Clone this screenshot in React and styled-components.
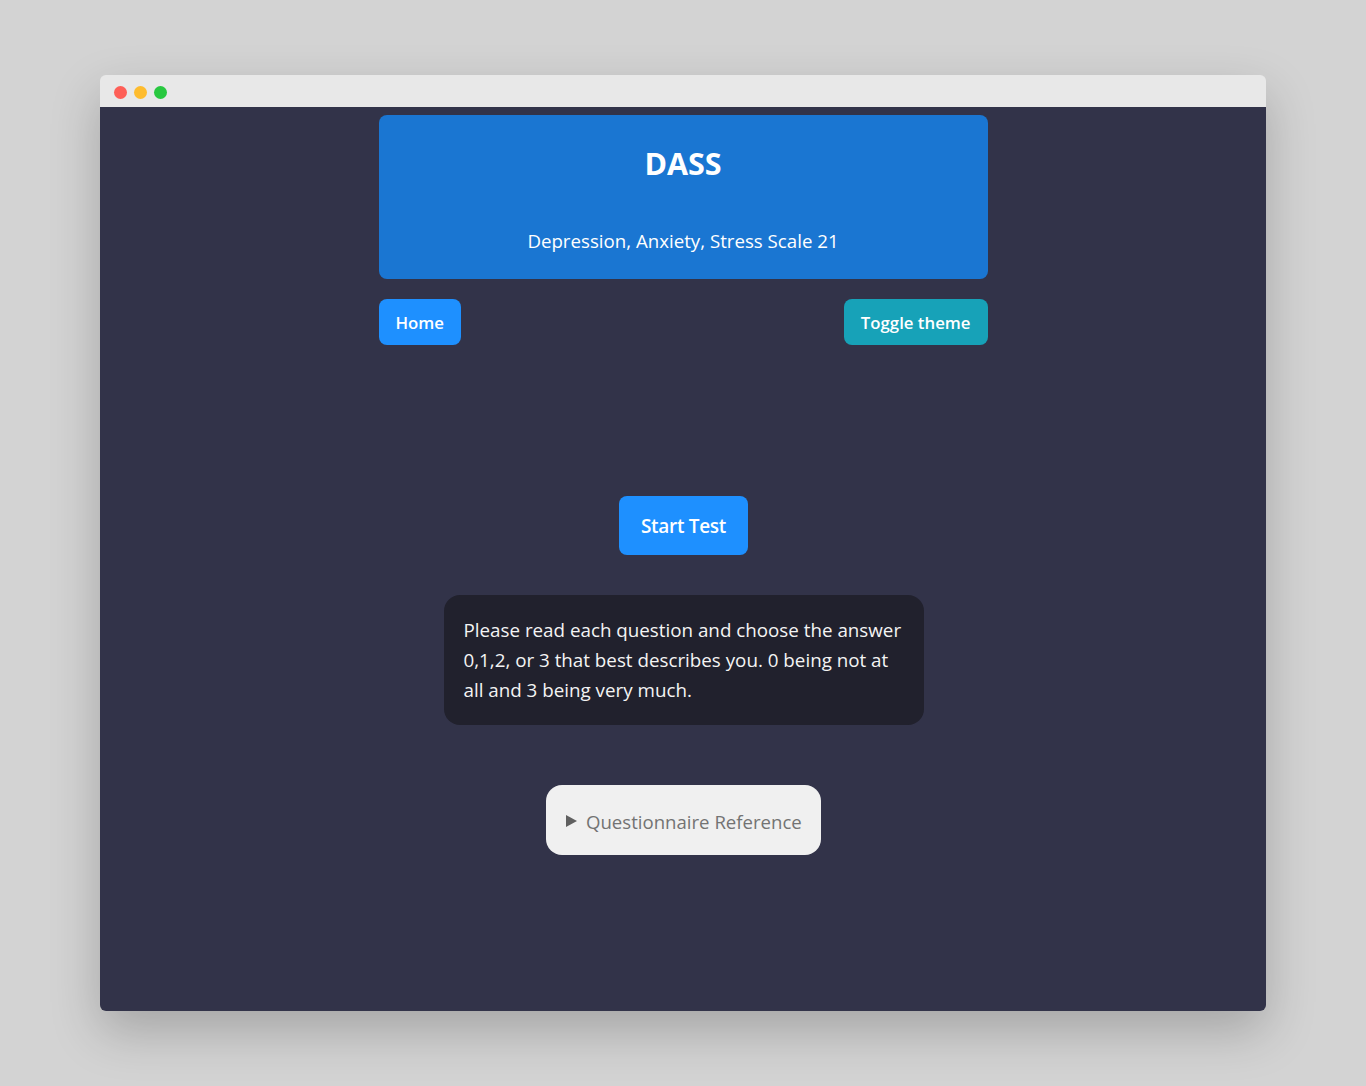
import React from 'react';
import styled, { createGlobalStyle } from 'styled-components';

const GlobalStyle = createGlobalStyle`
  html, body { margin: 0; padding: 0; background: #d3d3d3; }
  body { font-family: "Open Sans", "Noto Sans", sans-serif; }
`;

const Stage = styled.div` min-height: 1086px; box-sizing: border-box; padding: 75px 100px 75px 100px;`;
const Window = styled.div` width: 1166px; height: 936px; display: flex; flex-direction: column; border-radius: 6px; overflow: hidden; box-shadow: 0 20px 50px rgba(0,0,0,0.22);`;
const TitleBar = styled.div` height: 32px; box-sizing: border-box; padding: 2px 0 0 14px; flex-shrink: 0; background: #e8e8e8; display: flex; align-items: center; gap: 7px;`;
const Dot = styled.span` width: 13px; height: 13px; border-radius: 50%; background: ${p => p.$color};`;
const Content = styled.div` flex: 1; background: #323349; display: flex; flex-direction: column; align-items: center; padding-top: 8px;`;
const Column = styled.div` width: 609px; display: flex; flex-direction: column;`;
const Header = styled.header` height: 164px; box-sizing: border-box; background: #1a76d2; border-radius: 8px; color: #fff; text-align: center; padding-top: 29px;`;
const Title = styled.h1` margin: 0; font-size: 30.5px; font-weight: 700; line-height: 38px;`;
const Subtitle = styled.p` margin: 45px 0 0; font-size: 18.7px; line-height: 28px;`;
const NavRow = styled.div` display: flex; justify-content: space-between; margin-top: 20px;`;
const NavButton = styled.button` height: 46px; padding: 0 17px; border: none; border-radius: 8px; background: ${p => p.$bg}; color: #fff; font-family: inherit; font-size: 16.8px; font-weight: 600; cursor: pointer;`;
const Main = styled.main` display: flex; flex-direction: column; align-items: center; margin-top: 151px; padding-left: 1px;`;
const StartButton = styled.button` width: 129px; height: 59px; border: none; border-radius: 8px; background: #1e90ff; color: #fff; font-family: inherit; font-size: 19px; font-weight: 600; letter-spacing: -0.3px; cursor: pointer;`;
const Instructions = styled.div` width: 480px; box-sizing: border-box; margin-top: 40px; padding: 20px 20px 20px; background: #21212d; border-radius: 16px; color: #f4f4f4; font-size: 18.8px; line-height: 30px;`;
const Details = styled.details` margin-top: 60px; width: 275px; height: 70px; box-sizing: border-box; background: #f0f0f0; border-radius: 16px; display: flex; align-items: center;`;
const Summary = styled.summary` list-style: none; height: 70px; display: flex; align-items: center; padding: 2px 0 0 20px; box-sizing: border-box; gap: 9px; color: #737373; font-size: 18.6px; cursor: pointer;
  &::-webkit-details-marker { display: none; }`;
const Marker = styled.span` width: 0; height: 0; border-top: 6px solid transparent; border-bottom: 6px solid transparent; border-left: 11px solid #606060;`;

export default function App() {
  return (
    <>
      <GlobalStyle />
      <Stage>
        <Window>
          <TitleBar>
            <Dot $color="#fe5f57" />
            <Dot $color="#febc2e" />
            <Dot $color="#28c840" />
          </TitleBar>
          <Content>
            <Column>
              <Header>
                <Title>DASS</Title>
                <Subtitle>Depression, Anxiety, Stress Scale 21</Subtitle>
              </Header>
              <NavRow>
                <NavButton $bg="#1e90ff">Home</NavButton>
                <NavButton $bg="#17a2b8">Toggle theme</NavButton>
              </NavRow>
            </Column>
            <Main>
              <StartButton>Start Test</StartButton>
              <Instructions>
                Please read each question and choose the answer 0,1,2, or 3 that best describes you. 0 being not at all and 3 being very much.
              </Instructions>
              <Details>
                <Summary><Marker />Questionnaire Reference</Summary>
              </Details>
            </Main>
          </Content>
        </Window>
      </Stage>
    </>
  );
}
